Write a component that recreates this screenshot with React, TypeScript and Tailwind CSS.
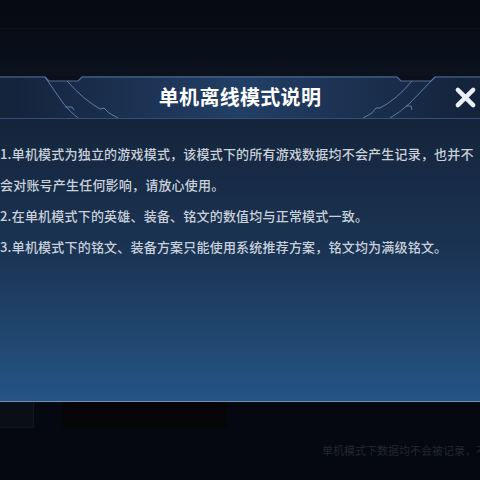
const lines = [
  "1.单机模式为独立的游戏模式，该模式下的所有游戏数据均不会产生记录，也并不",
  "会对账号产生任何影响，请放心使用。",
  "2.在单机模式下的英雄、装备、铭文的数值均与正常模式一致。",
  "3.单机模式下的铭文、装备方案只能使用系统推荐方案，铭文均为满级铭文。",
];

function HeaderFrame() {
  return (
    <svg
      className="pointer-events-none absolute inset-0 h-full w-full"
      viewBox="0 0 480 42"
      preserveAspectRatio="none"
    >
      {/* notches cut out of the top edge */}
      <path d="M45 0 L49 5 L78 5 L82 0 Z" fill="#0a0f1a" />
      <path d="M397 0 L401 5 L431 5 L435 0 Z" fill="#0a0f1a" />
      <path
        d="M0 1 L45 1 L49 5 L78 5 L82 1 L397 1 L401 5 L431 5 L435 1 L480 1"
        fill="none"
        stroke="#4f6f98"
        strokeWidth="1.2"
      />
      <g fill="none" stroke="#5a7ea8" strokeWidth="1">
        <path d="M45 1 L63 27 Q70 36 78 42" />
        <path d="M67 5 Q84 24 100 33 L104 32 L109 37 L118 42" />
        <path d="M65 31 L72 31 L74 34" />
        <path d="M435 1 L409 28 Q399 37 390 42" />
        <path d="M412 5 Q396 24 380 32 L376 32 L372 37 L363 42" />
        <path d="M406 30 L411 30 L412 34" />
      </g>
    </svg>
  );
}

function CloseIcon() {
  return (
    <svg viewBox="0 0 24 24" className="h-[23px] w-[23px]">
      <path
        d="M4 4 L20 20 M20 4 L4 20"
        stroke="#e9eff6"
        strokeWidth="4.6"
        strokeLinecap="round"
      />
    </svg>
  );
}

export default function App() {
  return (
    <div
      className="flex h-[480px] w-[480px] flex-col overflow-hidden bg-[#050810]"
      style={{ fontFamily: '"Noto Sans CJK SC", "Noto Sans", sans-serif' }}
    >
      {/* backdrop above the dialog */}
      <div className="flex h-[76px] flex-col justify-end bg-gradient-to-b from-[#060911] via-[#080d17] to-[#0b121e]">
        <div className="mb-[40px] h-px bg-[#0b1220]" />
        <div className="mb-[6px] h-px bg-[#0c1422]" />
      </div>

      {/* dialog */}
      <div className="flex flex-col">
        <div className="relative grid h-[42px] grid-cols-[1fr_auto_1fr] items-center bg-gradient-to-r from-[#14223a] via-[#223f66] to-[#14223a]">
          <HeaderFrame />
          <div />
          <h1 className="relative text-[20px] font-bold tracking-[0.3px] text-white">
            单机离线模式说明
          </h1>
          <div className="relative flex justify-end pr-[3px]">
            <CloseIcon />
          </div>
        </div>
        <div className="h-px bg-[#34507a]" />
        <div className="flex h-[282px] flex-col bg-gradient-to-b from-[#15243b] via-[#1b3556] to-[#245585] pt-[19px] text-[13px] font-medium leading-[31px] tracking-[0.2px] text-[#c9d1db]">
          {lines.map((line) => (
            <p key={line} className="whitespace-nowrap">
              {line}
            </p>
          ))}
        </div>
        <div className="h-px bg-[#6f8fb4]" />
      </div>

      {/* below the dialog */}
      <div className="flex flex-1 flex-col">
        <div className="flex h-[26px]">
          <div className="w-[34px] border-b border-r border-[#0f1522] bg-[#090e17]" />
          <div className="ml-[28px] w-[165px] bg-[#060609]" />
        </div>
        <div className="pt-[8px] pl-[322px]">
          <span className="whitespace-nowrap text-[11px] text-[#22262e]">
            单机模式下数据均不会被记录，不
          </span>
        </div>
      </div>
    </div>
  );
}
